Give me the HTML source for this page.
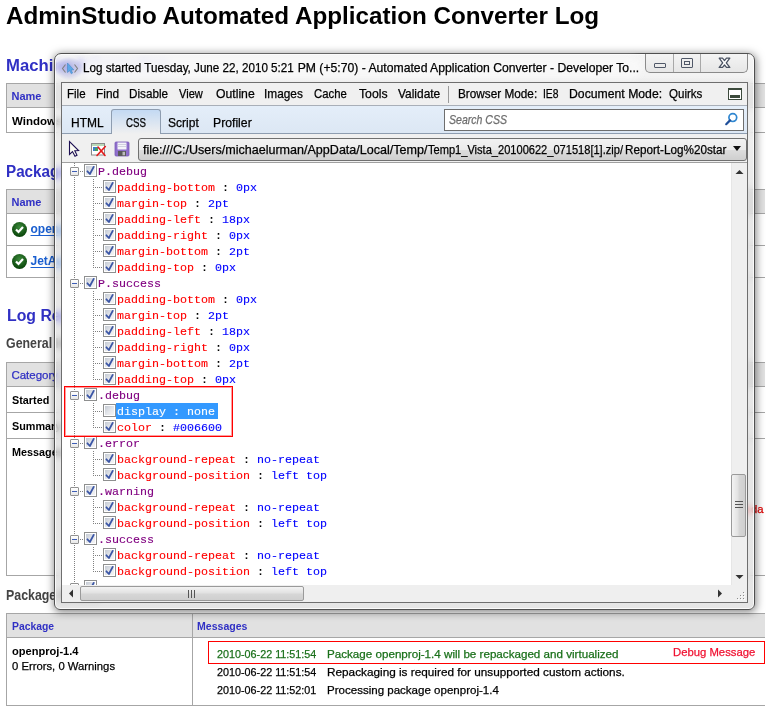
<!DOCTYPE html><html><head><meta charset="utf-8"><style>html,body{margin:0;padding:0;width:776px;height:713px;overflow:hidden;background:#fff;position:relative}</style></head><body><div id="t0" style="position:absolute;left:6.20px;top:2px;font-family:'Liberation Sans', sans-serif;font-size:24px;font-weight:bold;color:#000;white-space:pre;line-height:normal;transform:scaleX(1.0094);transform-origin:0 0;">AdminStudio Automated Application Converter Log</div>
<div id="t1" style="position:absolute;left:6.20px;top:55.2px;font-family:'Liberation Sans', sans-serif;font-size:17.4px;font-weight:bold;color:#3030C4;white-space:pre;line-height:normal;transform:scaleX(0.9600);transform-origin:0 0;">Machine Information</div>
<div style="position:absolute;left:6px;top:83px;width:759px;height:50px;border:1px solid #A6A6A6;border-right:none;box-sizing:border-box;background:#fff"></div>
<div style="position:absolute;left:7px;top:84px;width:758px;height:23px;background:#E1E1E1"></div>
<div style="position:absolute;left:6px;top:107px;width:759px;height:1px;background:#A6A6A6"></div>
<div id="t2" style="position:absolute;left:11.50px;top:89.5px;font-family:'Liberation Sans', sans-serif;font-size:11px;font-weight:bold;color:#3030C4;white-space:pre;line-height:normal;">Name</div>
<div id="t3" style="position:absolute;left:12.00px;top:114.7px;font-family:'Liberation Sans', sans-serif;font-size:11.5px;font-weight:bold;color:#000;white-space:pre;line-height:normal;">Windows 7</div>
<div id="t4" style="position:absolute;left:6.00px;top:160.7px;font-family:'Liberation Sans', sans-serif;font-size:17.4px;font-weight:bold;color:#3030C4;white-space:pre;line-height:normal;transform:scaleX(0.8750);transform-origin:0 0;">Packages</div>
<div style="position:absolute;left:6px;top:189px;width:759px;height:89px;border:1px solid #A6A6A6;border-right:none;box-sizing:border-box;background:#fff"></div>
<div style="position:absolute;left:7px;top:190px;width:758px;height:23px;background:#E1E1E1"></div>
<div style="position:absolute;left:6px;top:213px;width:759px;height:1px;background:#A6A6A6"></div>
<div style="position:absolute;left:6px;top:245px;width:759px;height:1px;background:#A6A6A6"></div>
<div id="t5" style="position:absolute;left:11.50px;top:195.8px;font-family:'Liberation Sans', sans-serif;font-size:11px;font-weight:bold;color:#3030C4;white-space:pre;line-height:normal;">Name</div>
<div style="position:absolute;left:12px;top:221.5px;width:15px;height:15px;border-radius:50%;background:radial-gradient(circle at 50% 35%,#3c8a3c,#0d4a0d 70%,#063006);"></div>
<svg style="position:absolute;left:12px;top:221.5px" width="15" height="15"><path d="M4 7.5 L6.5 10 L11 5" stroke="#fff" stroke-width="2.2" fill="none"/></svg>
<div style="position:absolute;left:12px;top:253.5px;width:15px;height:15px;border-radius:50%;background:radial-gradient(circle at 50% 35%,#3c8a3c,#0d4a0d 70%,#063006);"></div>
<svg style="position:absolute;left:12px;top:253.5px" width="15" height="15"><path d="M4 7.5 L6.5 10 L11 5" stroke="#fff" stroke-width="2.2" fill="none"/></svg>
<div id="t6" style="position:absolute;left:30.50px;top:222.2px;font-family:'Liberation Sans', sans-serif;font-size:12px;font-weight:bold;color:#1A5FD0;white-space:pre;line-height:normal;text-decoration:underline;text-decoration-skip-ink:none;text-underline-offset:2px">openproj-1.4</div>
<div id="t7" style="position:absolute;left:30.50px;top:254.2px;font-family:'Liberation Sans', sans-serif;font-size:12px;font-weight:bold;color:#1A5FD0;white-space:pre;line-height:normal;text-decoration:underline;text-decoration-skip-ink:none;text-underline-offset:2px">JetAudio</div>
<div id="t8" style="position:absolute;left:6.80px;top:304.5px;font-family:'Liberation Sans', sans-serif;font-size:17.4px;font-weight:bold;color:#3030C4;white-space:pre;line-height:normal;transform:scaleX(0.9100);transform-origin:0 0;">Log Report</div>
<div id="t9" style="position:absolute;left:6.20px;top:334.9px;font-family:'Liberation Sans', sans-serif;font-size:14.4px;font-weight:bold;color:#444444;white-space:pre;line-height:normal;transform:scaleX(0.8600);transform-origin:0 0;">General Information</div>
<div style="position:absolute;left:6px;top:362px;width:759px;height:214px;border:1px solid #A6A6A6;border-right:none;box-sizing:border-box;background:#fff"></div>
<div style="position:absolute;left:7px;top:363px;width:758px;height:23px;background:#E1E1E1"></div>
<div style="position:absolute;left:6px;top:386px;width:759px;height:1px;background:#A6A6A6"></div>
<div style="position:absolute;left:6px;top:412px;width:759px;height:1px;background:#A6A6A6"></div>
<div style="position:absolute;left:6px;top:438px;width:759px;height:1px;background:#A6A6A6"></div>
<div id="t10" style="position:absolute;left:11.40px;top:369px;font-family:'Liberation Sans', sans-serif;font-size:11.5px;font-weight:normal;color:#3030C4;white-space:pre;line-height:normal;-webkit-text-stroke:0.25px #3030C4;">Category</div>
<div id="t11" style="position:absolute;left:11.90px;top:394px;font-family:'Liberation Sans', sans-serif;font-size:11.5px;font-weight:bold;color:#000;white-space:pre;line-height:normal;transform:scaleX(0.9400);transform-origin:0 0;">Started</div>
<div id="t12" style="position:absolute;left:11.90px;top:419.8px;font-family:'Liberation Sans', sans-serif;font-size:11.5px;font-weight:bold;color:#000;white-space:pre;line-height:normal;transform:scaleX(0.9400);transform-origin:0 0;">Summary</div>
<div id="t13" style="position:absolute;left:11.90px;top:446px;font-family:'Liberation Sans', sans-serif;font-size:11.5px;font-weight:bold;color:#000;white-space:pre;line-height:normal;transform:scaleX(0.9400);transform-origin:0 0;">Messages</div>
<div id="t14" style="position:absolute;left:723.50px;top:502.7px;font-family:'Liberation Sans', sans-serif;font-size:11.5px;font-weight:normal;color:#DD0000;white-space:pre;line-height:normal;-webkit-text-stroke:0.25px #DD0000;transform:scaleX(0.9667);transform-origin:0 0;">Agen</div>
<div id="t15" style="position:absolute;left:750.60px;top:502.7px;font-family:'Liberation Sans', sans-serif;font-size:11.5px;font-weight:normal;color:#DD0000;white-space:pre;line-height:normal;-webkit-text-stroke:0.25px #DD0000;transform:scaleX(0.9846);transform-origin:0 0;">da</div>
<div id="t16" style="position:absolute;left:6.20px;top:586.5px;font-family:'Liberation Sans', sans-serif;font-size:14.4px;font-weight:bold;color:#444444;white-space:pre;line-height:normal;transform:scaleX(0.8600);transform-origin:0 0;">Package Details</div>
<div style="position:absolute;left:6px;top:613px;width:759px;height:93px;border:1px solid #A6A6A6;border-right:none;box-sizing:border-box;background:#fff"></div>
<div style="position:absolute;left:7px;top:614px;width:758px;height:23px;background:#E1E1E1"></div>
<div style="position:absolute;left:6px;top:637px;width:759px;height:1px;background:#A6A6A6"></div>
<div style="position:absolute;left:192px;top:613px;width:1px;height:93px;background:#A6A6A6"></div>
<div id="t17" style="position:absolute;left:11.80px;top:619.8px;font-family:'Liberation Sans', sans-serif;font-size:11.5px;font-weight:bold;color:#3030C4;white-space:pre;line-height:normal;transform:scaleX(0.9000);transform-origin:0 0;">Package</div>
<div id="t18" style="position:absolute;left:197.40px;top:619.7px;font-family:'Liberation Sans', sans-serif;font-size:11.5px;font-weight:bold;color:#3030C4;white-space:pre;line-height:normal;transform:scaleX(0.9182);transform-origin:0 0;">Messages</div>
<div id="t19" style="position:absolute;left:12.40px;top:644.7px;font-family:'Liberation Sans', sans-serif;font-size:11.5px;font-weight:bold;color:#000;white-space:pre;line-height:normal;transform:scaleX(0.9638);transform-origin:0 0;">openproj-1.4</div>
<div id="t20" style="position:absolute;left:12.00px;top:659.6px;font-family:'Liberation Sans', sans-serif;font-size:11.5px;font-weight:normal;color:#000;white-space:pre;line-height:normal;-webkit-text-stroke:0.25px #000;transform:scaleX(0.9810);transform-origin:0 0;">0 Errors, 0 Warnings</div>
<div style="position:absolute;left:208px;top:641px;width:557px;height:23px;border:1px solid #FF0000;box-sizing:border-box"></div>
<div id="t21" style="position:absolute;left:216.70px;top:647.6px;font-family:'Liberation Sans', sans-serif;font-size:11.5px;font-weight:normal;color:#1A701A;white-space:pre;line-height:normal;-webkit-text-stroke:0.25px #1A701A;transform:scaleX(0.9373);transform-origin:0 0;">2010-06-22 11:51:54</div>
<div id="t22" style="position:absolute;left:326.99px;top:647.6px;font-family:'Liberation Sans', sans-serif;font-size:11.5px;font-weight:normal;color:#1A701A;white-space:pre;line-height:normal;-webkit-text-stroke:0.25px #1A701A;transform:scaleX(1.0111);transform-origin:0 0;">Package openproj-1.4 will be repackaged and virtualized</div>
<div id="t23" style="position:absolute;left:672.72px;top:646px;font-family:'Liberation Sans', sans-serif;font-size:11.5px;font-weight:normal;color:#F01030;white-space:pre;line-height:normal;-webkit-text-stroke:0.25px #F01030;transform:scaleX(0.9831);transform-origin:0 0;">Debug Message</div>
<div id="t24" style="position:absolute;left:216.70px;top:665.7px;font-family:'Liberation Sans', sans-serif;font-size:11.5px;font-weight:normal;color:#000;white-space:pre;line-height:normal;-webkit-text-stroke:0.25px #000;transform:scaleX(0.9373);transform-origin:0 0;">2010-06-22 11:51:54</div>
<div id="t25" style="position:absolute;left:326.98px;top:665.7px;font-family:'Liberation Sans', sans-serif;font-size:11.5px;font-weight:normal;color:#000;white-space:pre;line-height:normal;-webkit-text-stroke:0.25px #000;transform:scaleX(1.0239);transform-origin:0 0;">Repackaging is required for unsupported custom actions.</div>
<div id="t26" style="position:absolute;left:216.70px;top:683.7px;font-family:'Liberation Sans', sans-serif;font-size:11.5px;font-weight:normal;color:#000;white-space:pre;line-height:normal;-webkit-text-stroke:0.25px #000;transform:scaleX(0.9373);transform-origin:0 0;">2010-06-22 11:52:01</div>
<div id="t27" style="position:absolute;left:327.00px;top:683.7px;font-family:'Liberation Sans', sans-serif;font-size:11.5px;font-weight:normal;color:#000;white-space:pre;line-height:normal;-webkit-text-stroke:0.25px #000;transform:scaleX(1.0029);transform-origin:0 0;">Processing package openproj-1.4</div>
<div style="position:absolute;left:54px;top:53px;width:701px;height:557px;border:1px solid #505050;box-sizing:border-box;border-radius:7px 7px 6px 6px;background:linear-gradient(rgba(236,236,236,0.55),rgba(212,212,212,0.55) 30%,rgba(208,208,208,0.55));-webkit-backdrop-filter:blur(3.5px) saturate(1.6);backdrop-filter:blur(3.5px) saturate(1.6);box-shadow:inset 0 0 0 1px rgba(255,255,255,0.8),0.5px 1.5px 9px rgba(0,0,0,0.5)"></div>
<div style="position:absolute;left:82px;top:57px;width:560px;height:22px;border-radius:11px;background:rgba(248,248,248,0.9);filter:blur(3px)"></div>
<div style="position:absolute;left:55px;top:57px;width:28px;height:23px;border-radius:50%;background:radial-gradient(ellipse at center,rgba(120,125,205,0.42),rgba(120,125,205,0.18) 50%,rgba(120,125,205,0) 72%)"></div>
<svg style="position:absolute;left:60px;top:61px" width="22" height="14"><path d="M5.5 3.5 L2.5 7.5 L5.5 11.5" stroke="#808080" stroke-width="1.1" fill="none"/><path d="M14.5 3.5 L17.5 7.5 L14.5 11.5" stroke="#808080" stroke-width="1.1" fill="none"/><path d="M7.5 2 L7.5 11.5 L9.6 9.6 L11.3 12.8 L12.6 12 L11.1 9 L13.8 8.8 Z" fill="#5BA8E8" stroke="#3a7fc0" stroke-width="0.5"/></svg>
<div id="t28" style="position:absolute;left:82.95px;top:60.9px;font-family:'Liberation Sans', sans-serif;font-size:12.2px;font-weight:normal;color:#000;white-space:pre;line-height:normal;-webkit-text-stroke:0.25px #000;transform:scaleX(0.9550);transform-origin:0 0;">Log started Tuesday, June 22, 2010 5:21</div>
<div id="t29" style="position:absolute;left:297.70px;top:60.9px;font-family:'Liberation Sans', sans-serif;font-size:12.2px;font-weight:normal;color:#000;white-space:pre;line-height:normal;-webkit-text-stroke:0.25px #000;">PM (+5:70) - Automated Application Converter - Developer To...</div>
<div style="position:absolute;left:645px;top:54px;width:103px;height:19px;border:1px solid #8a8a8a;border-top:none;box-sizing:border-box;border-radius:0 0 5px 5px;background:linear-gradient(#F4F4F4,#E6E6E6)"></div>
<div style="position:absolute;left:673px;top:54px;width:1px;height:18px;background:#A8A8A8"></div>
<div style="position:absolute;left:700px;top:54px;width:1px;height:18px;background:#A8A8A8"></div>
<div style="position:absolute;left:654px;top:63px;width:12px;height:5px;border:1.5px solid #505868;box-sizing:border-box;border-radius:1px"></div>
<div style="position:absolute;left:681px;top:58px;width:12px;height:10px;border:1.5px solid #505868;box-sizing:border-box;border-radius:1px"></div>
<div style="position:absolute;left:684px;top:61px;width:6px;height:4px;border:1.5px solid #505868;box-sizing:border-box"></div>
<svg style="position:absolute;left:717px;top:57px" width="15" height="12"><path d="M2.2 1.2 L5.5 1.2 L7.5 3.6 L9.5 1.2 L12.8 1.2 L9.3 5.8 L12.8 10.4 L9.5 10.4 L7.5 8 L5.5 10.4 L2.2 10.4 L5.7 5.8 Z" fill="#ffffff" stroke="#4a5262" stroke-width="1.3" stroke-linejoin="round"/></svg>
<div style="position:absolute;left:61px;top:82px;width:687px;height:521px;border:1px solid #6e6e6e;box-sizing:border-box;background:#F0F0F0"></div>
<div style="position:absolute;left:62px;top:83px;width:685px;height:22px;background:#F0F0F0"></div>
<div style="position:absolute;left:62px;top:105px;width:685px;height:1px;background:#A9AFB8"></div>
<div id="t30" style="position:absolute;left:66.76px;top:86.8px;font-family:'Liberation Sans', sans-serif;font-size:12.2px;font-weight:normal;color:#000;white-space:pre;line-height:normal;-webkit-text-stroke:0.25px #000;transform:scaleX(0.9444);transform-origin:0 0;">File</div>
<div id="t31" style="position:absolute;left:95.83px;top:86.8px;font-family:'Liberation Sans', sans-serif;font-size:12.2px;font-weight:normal;color:#000;white-space:pre;line-height:normal;-webkit-text-stroke:0.25px #000;transform:scaleX(0.9727);transform-origin:0 0;">Find</div>
<div id="t32" style="position:absolute;left:129.34px;top:86.8px;font-family:'Liberation Sans', sans-serif;font-size:12.2px;font-weight:normal;color:#000;white-space:pre;line-height:normal;-webkit-text-stroke:0.25px #000;transform:scaleX(0.9590);transform-origin:0 0;">Disable</div>
<div id="t33" style="position:absolute;left:179.30px;top:86.8px;font-family:'Liberation Sans', sans-serif;font-size:12.2px;font-weight:normal;color:#000;white-space:pre;line-height:normal;-webkit-text-stroke:0.25px #000;transform:scaleX(0.9074);transform-origin:0 0;">View</div>
<div id="t34" style="position:absolute;left:215.90px;top:86.8px;font-family:'Liberation Sans', sans-serif;font-size:12.2px;font-weight:normal;color:#000;white-space:pre;line-height:normal;-webkit-text-stroke:0.25px #000;transform:scaleX(1.0026);transform-origin:0 0;">Outline</div>
<div id="t35" style="position:absolute;left:263.93px;top:86.8px;font-family:'Liberation Sans', sans-serif;font-size:12.2px;font-weight:normal;color:#000;white-space:pre;line-height:normal;-webkit-text-stroke:0.25px #000;transform:scaleX(0.9718);transform-origin:0 0;">Images</div>
<div id="t36" style="position:absolute;left:314.40px;top:86.8px;font-family:'Liberation Sans', sans-serif;font-size:12.2px;font-weight:normal;color:#000;white-space:pre;line-height:normal;-webkit-text-stroke:0.25px #000;transform:scaleX(0.9286);transform-origin:0 0;">Cache</div>
<div id="t37" style="position:absolute;left:358.70px;top:86.8px;font-family:'Liberation Sans', sans-serif;font-size:12.2px;font-weight:normal;color:#000;white-space:pre;line-height:normal;-webkit-text-stroke:0.25px #000;transform:scaleX(1.0036);transform-origin:0 0;">Tools</div>
<div id="t38" style="position:absolute;left:397.90px;top:86.8px;font-family:'Liberation Sans', sans-serif;font-size:12.2px;font-weight:normal;color:#000;white-space:pre;line-height:normal;-webkit-text-stroke:0.25px #000;transform:scaleX(0.9791);transform-origin:0 0;">Validate</div>
<div style="position:absolute;left:448px;top:86px;width:1px;height:17px;background:#9a9a9a"></div>
<div id="t39" style="position:absolute;left:458.33px;top:86.8px;font-family:'Liberation Sans', sans-serif;font-size:12.2px;font-weight:normal;color:#000;white-space:pre;line-height:normal;-webkit-text-stroke:0.25px #000;transform:scaleX(0.9663);transform-origin:0 0;">Browser Mode:</div>
<div id="t40" style="position:absolute;left:542.95px;top:86.8px;font-family:'Liberation Sans', sans-serif;font-size:12.2px;font-weight:normal;color:#000;white-space:pre;line-height:normal;-webkit-text-stroke:0.25px #000;transform:scaleX(0.8471);transform-origin:0 0;">IE8</div>
<div id="t41" style="position:absolute;left:569.40px;top:86.8px;font-family:'Liberation Sans', sans-serif;font-size:12.2px;font-weight:normal;color:#000;white-space:pre;line-height:normal;-webkit-text-stroke:0.25px #000;transform:scaleX(1.0033);transform-origin:0 0;">Document Mode:</div>
<div id="t42" style="position:absolute;left:669.40px;top:86.8px;font-family:'Liberation Sans', sans-serif;font-size:12.2px;font-weight:normal;color:#000;white-space:pre;line-height:normal;-webkit-text-stroke:0.25px #000;transform:scaleX(0.9486);transform-origin:0 0;">Quirks</div>
<div style="position:absolute;left:728px;top:88px;width:14px;height:12px;border:1.5px solid #3c4a3c;border-top-width:2px;box-sizing:border-box;background:#fff"></div>
<div style="position:absolute;left:730px;top:95px;width:10px;height:3px;background:#3c4a3c"></div>
<div style="position:absolute;left:62px;top:106px;width:685px;height:27px;background:linear-gradient(#E4EEF9,#DCE7F4)"></div>
<div style="position:absolute;left:62px;top:133px;width:685px;height:1px;background:#8E9DB0"></div>
<div id="t43" style="position:absolute;left:70.82px;top:115.7px;font-family:'Liberation Sans', sans-serif;font-size:12.2px;font-weight:normal;color:#000;white-space:pre;line-height:normal;-webkit-text-stroke:0.25px #000;transform:scaleX(0.9813);transform-origin:0 0;">HTML</div>
<div style="position:absolute;left:111px;top:109px;width:50px;height:25px;border:1px solid #8E9DB0;border-bottom:none;box-sizing:border-box;border-radius:3px 3px 0 0;background:linear-gradient(#C3D9F3,#F0F0F0)"></div>
<div id="t44" style="position:absolute;left:125.90px;top:115.7px;font-family:'Liberation Sans', sans-serif;font-size:12.2px;font-weight:normal;color:#000;white-space:pre;line-height:normal;-webkit-text-stroke:0.25px #000;transform:scaleX(0.7960);transform-origin:0 0;">CSS</div>
<div id="t45" style="position:absolute;left:168.01px;top:115.7px;font-family:'Liberation Sans', sans-serif;font-size:12.2px;font-weight:normal;color:#000;white-space:pre;line-height:normal;-webkit-text-stroke:0.25px #000;transform:scaleX(0.9867);transform-origin:0 0;">Script</div>
<div id="t46" style="position:absolute;left:213.10px;top:115.7px;font-family:'Liberation Sans', sans-serif;font-size:12.2px;font-weight:normal;color:#000;white-space:pre;line-height:normal;-webkit-text-stroke:0.25px #000;transform:scaleX(1.0026);transform-origin:0 0;">Profiler</div>
<div style="position:absolute;left:444px;top:109px;width:300px;height:22px;border:1px solid #6E6E6E;box-sizing:border-box;background:#fff"></div>
<div id="t47" style="position:absolute;left:449.00px;top:113.2px;font-family:'Liberation Sans', sans-serif;font-size:12.2px;font-weight:normal;color:#6D6D6D;white-space:pre;line-height:normal;font-style:italic;-webkit-text-stroke:0.25px #6D6D6D;transform:scaleX(0.8657);transform-origin:0 0;">Search CSS</div>
<svg style="position:absolute;left:724px;top:111px" width="16" height="16"><circle cx="8.8" cy="6.6" r="3.9" stroke="#2f86d0" stroke-width="1.7" fill="#fff"/><path d="M6 9.4 L2.2 13.2" stroke="#1f4f9a" stroke-width="2.2" stroke-linecap="round"/></svg>
<div style="position:absolute;left:62px;top:134px;width:685px;height:28px;background:#F0F0F0"></div>
<svg style="position:absolute;left:64px;top:136px" width="20" height="24"><path d="M5.5 5.5 L5.5 18.5 L8.5 15.6 L11 20.3 L13 19.3 L10.8 14.8 L14.6 14.6 Z" fill="#fbfbf4" stroke="#1c0f52" stroke-width="1.1" stroke-linejoin="miter"/></svg>
<svg style="position:absolute;left:90px;top:142px" width="18" height="16"><rect x="1.5" y="1.5" width="13" height="11.5" fill="#fff" stroke="#8a8a8a" stroke-width="1"/><rect x="2" y="2" width="12" height="2" fill="#b9dab9"/><rect x="3" y="5" width="5" height="4" fill="#3c7fc8"/><rect x="5" y="6" width="3" height="3" fill="#4aa05a"/><path d="M7 13.5 L15.3 4.5 M8 5 L15 13.5" stroke="#e41a1a" stroke-width="1.6" stroke-linecap="round"/></svg>
<svg style="position:absolute;left:114px;top:141px" width="16" height="16"><rect x="1" y="1" width="14" height="14" rx="1" fill="#8f6fcc" stroke="#7a5ab8" stroke-width="0.8"/><rect x="3.5" y="1.5" width="9" height="7" fill="#f4f4fa"/><path d="M4 3.5 H12 M4 5.5 H12" stroke="#c8c8d8" stroke-width="0.8"/><rect x="4" y="10" width="8" height="5" fill="#5a5a5a"/><rect x="8.5" y="10.8" width="2.5" height="3.5" fill="#bdbdbd"/></svg>
<div style="position:absolute;left:138px;top:138px;width:609px;height:23px;border:1px solid #707070;box-sizing:border-box;border-radius:3px;background:linear-gradient(#F2F2F2 0%,#EBEBEB 50%,#DDDDDD 51%,#CFCFCF 100%)"></div>
<div id="t48" style="position:absolute;left:142.50px;top:142.8px;font-family:'Liberation Sans', sans-serif;font-size:12.2px;font-weight:normal;color:#000;white-space:pre;line-height:normal;-webkit-text-stroke:0.25px #000;transform:scaleX(1.0292);transform-origin:0 0;">file:///C:/Users/michaelurman/AppData/Local/Temp/</div>
<div id="t49" style="position:absolute;left:428.20px;top:142.8px;font-family:'Liberation Sans', sans-serif;font-size:12.2px;font-weight:normal;color:#000;white-space:pre;line-height:normal;-webkit-text-stroke:0.25px #000;transform:scaleX(0.9088);transform-origin:0 0;">Temp1_Vista_20100622_071518[1].zip/</div>
<div id="t50" style="position:absolute;left:624.64px;top:142.8px;font-family:'Liberation Sans', sans-serif;font-size:12.2px;font-weight:normal;color:#000;white-space:pre;line-height:normal;-webkit-text-stroke:0.25px #000;transform:scaleX(0.9600);transform-origin:0 0;">Report-Log%20star</div>
<svg style="position:absolute;left:733px;top:146px" width="9" height="6"><path d="M0 0 L8 0 L4 5 Z" fill="#111"/></svg>
<div style="position:absolute;left:62px;top:162px;width:685px;height:1px;background:#A0A0A0"></div>
<div style="position:absolute;left:62px;top:163px;width:669px;height:422px;background:#fff"></div>
<div style="position:absolute;left:74px;top:163px;width:1px;height:422px;background:repeating-linear-gradient(#808080 0 1px,transparent 1px 2px)"></div>
<div style="position:absolute;left:70px;top:167px;width:9px;height:9px;border:1px solid #919191;box-sizing:border-box;border-radius:1px;background:linear-gradient(#fff,#E8E8E8)"><div style="position:absolute;left:1px;top:3px;width:5px;height:1px;background:#3D5DB5"></div></div>
<div style="position:absolute;left:80px;top:171px;width:4px;height:1px;background:repeating-linear-gradient(90deg,#808080 0 1px,transparent 1px 2px)"></div>
<div style="position:absolute;left:84px;top:164px;width:13px;height:13px;border:1px solid #8E8F8F;box-sizing:border-box;background:#FFFFFF"><div style="position:absolute;left:1px;top:1px;width:9px;height:9px;background:linear-gradient(135deg,#C4CAD4,#E6E8EC 55%,#F4F4F4)"></div></div><svg style="position:absolute;left:84px;top:164px" width="13" height="13"><path d="M3.4 7.3 L5.9 10 L9.7 2.9" stroke="#3B56A6" stroke-width="1.8" fill="none" stroke-linejoin="round" stroke-linecap="round"/></svg>
<div id="t51" style="position:absolute;left:98.00px;top:165.2px;font-family:'Liberation Mono', monospace;font-size:11.67px;font-weight:normal;color:#800080;white-space:pre;line-height:normal;-webkit-text-stroke:0.12px #800080;">P.debug</div>
<div style="position:absolute;left:93px;top:179px;width:1px;height:89px;background:repeating-linear-gradient(#808080 0 1px,transparent 1px 2px)"></div>
<div style="position:absolute;left:93px;top:187px;width:9px;height:1px;background:repeating-linear-gradient(90deg,#808080 0 1px,transparent 1px 2px)"></div>
<div style="position:absolute;left:103px;top:180px;width:13px;height:13px;border:1px solid #8E8F8F;box-sizing:border-box;background:#FFFFFF"><div style="position:absolute;left:1px;top:1px;width:9px;height:9px;background:linear-gradient(135deg,#C4CAD4,#E6E8EC 55%,#F4F4F4)"></div></div><svg style="position:absolute;left:103px;top:180px" width="13" height="13"><path d="M3.4 7.3 L5.9 10 L9.7 2.9" stroke="#3B56A6" stroke-width="1.8" fill="none" stroke-linejoin="round" stroke-linecap="round"/></svg>
<div id="t52" style="position:absolute;left:117.00px;top:181.2px;font-family:'Liberation Mono', monospace;font-size:11.67px;font-weight:normal;color:#FF0000;white-space:pre;line-height:normal;-webkit-text-stroke:0.12px #FF0000;">padding-bottom</div>
<div id="t53" style="position:absolute;left:222.00px;top:181.2px;font-family:'Liberation Mono', monospace;font-size:11.67px;font-weight:normal;color:#000;white-space:pre;line-height:normal;-webkit-text-stroke:0.12px #000;">:</div>
<div id="t54" style="position:absolute;left:236.00px;top:181.2px;font-family:'Liberation Mono', monospace;font-size:11.67px;font-weight:normal;color:#0000FF;white-space:pre;line-height:normal;-webkit-text-stroke:0.12px #0000FF;">0px</div>
<div style="position:absolute;left:93px;top:203px;width:9px;height:1px;background:repeating-linear-gradient(90deg,#808080 0 1px,transparent 1px 2px)"></div>
<div style="position:absolute;left:103px;top:196px;width:13px;height:13px;border:1px solid #8E8F8F;box-sizing:border-box;background:#FFFFFF"><div style="position:absolute;left:1px;top:1px;width:9px;height:9px;background:linear-gradient(135deg,#C4CAD4,#E6E8EC 55%,#F4F4F4)"></div></div><svg style="position:absolute;left:103px;top:196px" width="13" height="13"><path d="M3.4 7.3 L5.9 10 L9.7 2.9" stroke="#3B56A6" stroke-width="1.8" fill="none" stroke-linejoin="round" stroke-linecap="round"/></svg>
<div id="t55" style="position:absolute;left:117.00px;top:197.2px;font-family:'Liberation Mono', monospace;font-size:11.67px;font-weight:normal;color:#FF0000;white-space:pre;line-height:normal;-webkit-text-stroke:0.12px #FF0000;">margin-top</div>
<div id="t56" style="position:absolute;left:194.00px;top:197.2px;font-family:'Liberation Mono', monospace;font-size:11.67px;font-weight:normal;color:#000;white-space:pre;line-height:normal;-webkit-text-stroke:0.12px #000;">:</div>
<div id="t57" style="position:absolute;left:208.00px;top:197.2px;font-family:'Liberation Mono', monospace;font-size:11.67px;font-weight:normal;color:#0000FF;white-space:pre;line-height:normal;-webkit-text-stroke:0.12px #0000FF;">2pt</div>
<div style="position:absolute;left:93px;top:219px;width:9px;height:1px;background:repeating-linear-gradient(90deg,#808080 0 1px,transparent 1px 2px)"></div>
<div style="position:absolute;left:103px;top:212px;width:13px;height:13px;border:1px solid #8E8F8F;box-sizing:border-box;background:#FFFFFF"><div style="position:absolute;left:1px;top:1px;width:9px;height:9px;background:linear-gradient(135deg,#C4CAD4,#E6E8EC 55%,#F4F4F4)"></div></div><svg style="position:absolute;left:103px;top:212px" width="13" height="13"><path d="M3.4 7.3 L5.9 10 L9.7 2.9" stroke="#3B56A6" stroke-width="1.8" fill="none" stroke-linejoin="round" stroke-linecap="round"/></svg>
<div id="t58" style="position:absolute;left:117.00px;top:213.2px;font-family:'Liberation Mono', monospace;font-size:11.67px;font-weight:normal;color:#FF0000;white-space:pre;line-height:normal;-webkit-text-stroke:0.12px #FF0000;">padding-left</div>
<div id="t59" style="position:absolute;left:208.00px;top:213.2px;font-family:'Liberation Mono', monospace;font-size:11.67px;font-weight:normal;color:#000;white-space:pre;line-height:normal;-webkit-text-stroke:0.12px #000;">:</div>
<div id="t60" style="position:absolute;left:222.00px;top:213.2px;font-family:'Liberation Mono', monospace;font-size:11.67px;font-weight:normal;color:#0000FF;white-space:pre;line-height:normal;-webkit-text-stroke:0.12px #0000FF;">18px</div>
<div style="position:absolute;left:93px;top:235px;width:9px;height:1px;background:repeating-linear-gradient(90deg,#808080 0 1px,transparent 1px 2px)"></div>
<div style="position:absolute;left:103px;top:228px;width:13px;height:13px;border:1px solid #8E8F8F;box-sizing:border-box;background:#FFFFFF"><div style="position:absolute;left:1px;top:1px;width:9px;height:9px;background:linear-gradient(135deg,#C4CAD4,#E6E8EC 55%,#F4F4F4)"></div></div><svg style="position:absolute;left:103px;top:228px" width="13" height="13"><path d="M3.4 7.3 L5.9 10 L9.7 2.9" stroke="#3B56A6" stroke-width="1.8" fill="none" stroke-linejoin="round" stroke-linecap="round"/></svg>
<div id="t61" style="position:absolute;left:117.00px;top:229.2px;font-family:'Liberation Mono', monospace;font-size:11.67px;font-weight:normal;color:#FF0000;white-space:pre;line-height:normal;-webkit-text-stroke:0.12px #FF0000;">padding-right</div>
<div id="t62" style="position:absolute;left:215.00px;top:229.2px;font-family:'Liberation Mono', monospace;font-size:11.67px;font-weight:normal;color:#000;white-space:pre;line-height:normal;-webkit-text-stroke:0.12px #000;">:</div>
<div id="t63" style="position:absolute;left:229.00px;top:229.2px;font-family:'Liberation Mono', monospace;font-size:11.67px;font-weight:normal;color:#0000FF;white-space:pre;line-height:normal;-webkit-text-stroke:0.12px #0000FF;">0px</div>
<div style="position:absolute;left:93px;top:251px;width:9px;height:1px;background:repeating-linear-gradient(90deg,#808080 0 1px,transparent 1px 2px)"></div>
<div style="position:absolute;left:103px;top:244px;width:13px;height:13px;border:1px solid #8E8F8F;box-sizing:border-box;background:#FFFFFF"><div style="position:absolute;left:1px;top:1px;width:9px;height:9px;background:linear-gradient(135deg,#C4CAD4,#E6E8EC 55%,#F4F4F4)"></div></div><svg style="position:absolute;left:103px;top:244px" width="13" height="13"><path d="M3.4 7.3 L5.9 10 L9.7 2.9" stroke="#3B56A6" stroke-width="1.8" fill="none" stroke-linejoin="round" stroke-linecap="round"/></svg>
<div id="t64" style="position:absolute;left:117.00px;top:245.2px;font-family:'Liberation Mono', monospace;font-size:11.67px;font-weight:normal;color:#FF0000;white-space:pre;line-height:normal;-webkit-text-stroke:0.12px #FF0000;">margin-bottom</div>
<div id="t65" style="position:absolute;left:215.00px;top:245.2px;font-family:'Liberation Mono', monospace;font-size:11.67px;font-weight:normal;color:#000;white-space:pre;line-height:normal;-webkit-text-stroke:0.12px #000;">:</div>
<div id="t66" style="position:absolute;left:229.00px;top:245.2px;font-family:'Liberation Mono', monospace;font-size:11.67px;font-weight:normal;color:#0000FF;white-space:pre;line-height:normal;-webkit-text-stroke:0.12px #0000FF;">2pt</div>
<div style="position:absolute;left:93px;top:267px;width:9px;height:1px;background:repeating-linear-gradient(90deg,#808080 0 1px,transparent 1px 2px)"></div>
<div style="position:absolute;left:103px;top:260px;width:13px;height:13px;border:1px solid #8E8F8F;box-sizing:border-box;background:#FFFFFF"><div style="position:absolute;left:1px;top:1px;width:9px;height:9px;background:linear-gradient(135deg,#C4CAD4,#E6E8EC 55%,#F4F4F4)"></div></div><svg style="position:absolute;left:103px;top:260px" width="13" height="13"><path d="M3.4 7.3 L5.9 10 L9.7 2.9" stroke="#3B56A6" stroke-width="1.8" fill="none" stroke-linejoin="round" stroke-linecap="round"/></svg>
<div id="t67" style="position:absolute;left:117.00px;top:261.2px;font-family:'Liberation Mono', monospace;font-size:11.67px;font-weight:normal;color:#FF0000;white-space:pre;line-height:normal;-webkit-text-stroke:0.12px #FF0000;">padding-top</div>
<div id="t68" style="position:absolute;left:201.00px;top:261.2px;font-family:'Liberation Mono', monospace;font-size:11.67px;font-weight:normal;color:#000;white-space:pre;line-height:normal;-webkit-text-stroke:0.12px #000;">:</div>
<div id="t69" style="position:absolute;left:215.00px;top:261.2px;font-family:'Liberation Mono', monospace;font-size:11.67px;font-weight:normal;color:#0000FF;white-space:pre;line-height:normal;-webkit-text-stroke:0.12px #0000FF;">0px</div>
<div style="position:absolute;left:70px;top:279px;width:9px;height:9px;border:1px solid #919191;box-sizing:border-box;border-radius:1px;background:linear-gradient(#fff,#E8E8E8)"><div style="position:absolute;left:1px;top:3px;width:5px;height:1px;background:#3D5DB5"></div></div>
<div style="position:absolute;left:80px;top:283px;width:4px;height:1px;background:repeating-linear-gradient(90deg,#808080 0 1px,transparent 1px 2px)"></div>
<div style="position:absolute;left:84px;top:276px;width:13px;height:13px;border:1px solid #8E8F8F;box-sizing:border-box;background:#FFFFFF"><div style="position:absolute;left:1px;top:1px;width:9px;height:9px;background:linear-gradient(135deg,#C4CAD4,#E6E8EC 55%,#F4F4F4)"></div></div><svg style="position:absolute;left:84px;top:276px" width="13" height="13"><path d="M3.4 7.3 L5.9 10 L9.7 2.9" stroke="#3B56A6" stroke-width="1.8" fill="none" stroke-linejoin="round" stroke-linecap="round"/></svg>
<div id="t70" style="position:absolute;left:98.00px;top:277.2px;font-family:'Liberation Mono', monospace;font-size:11.67px;font-weight:normal;color:#800080;white-space:pre;line-height:normal;-webkit-text-stroke:0.12px #800080;">P.success</div>
<div style="position:absolute;left:93px;top:291px;width:1px;height:89px;background:repeating-linear-gradient(#808080 0 1px,transparent 1px 2px)"></div>
<div style="position:absolute;left:93px;top:299px;width:9px;height:1px;background:repeating-linear-gradient(90deg,#808080 0 1px,transparent 1px 2px)"></div>
<div style="position:absolute;left:103px;top:292px;width:13px;height:13px;border:1px solid #8E8F8F;box-sizing:border-box;background:#FFFFFF"><div style="position:absolute;left:1px;top:1px;width:9px;height:9px;background:linear-gradient(135deg,#C4CAD4,#E6E8EC 55%,#F4F4F4)"></div></div><svg style="position:absolute;left:103px;top:292px" width="13" height="13"><path d="M3.4 7.3 L5.9 10 L9.7 2.9" stroke="#3B56A6" stroke-width="1.8" fill="none" stroke-linejoin="round" stroke-linecap="round"/></svg>
<div id="t71" style="position:absolute;left:117.00px;top:293.2px;font-family:'Liberation Mono', monospace;font-size:11.67px;font-weight:normal;color:#FF0000;white-space:pre;line-height:normal;-webkit-text-stroke:0.12px #FF0000;">padding-bottom</div>
<div id="t72" style="position:absolute;left:222.00px;top:293.2px;font-family:'Liberation Mono', monospace;font-size:11.67px;font-weight:normal;color:#000;white-space:pre;line-height:normal;-webkit-text-stroke:0.12px #000;">:</div>
<div id="t73" style="position:absolute;left:236.00px;top:293.2px;font-family:'Liberation Mono', monospace;font-size:11.67px;font-weight:normal;color:#0000FF;white-space:pre;line-height:normal;-webkit-text-stroke:0.12px #0000FF;">0px</div>
<div style="position:absolute;left:93px;top:315px;width:9px;height:1px;background:repeating-linear-gradient(90deg,#808080 0 1px,transparent 1px 2px)"></div>
<div style="position:absolute;left:103px;top:308px;width:13px;height:13px;border:1px solid #8E8F8F;box-sizing:border-box;background:#FFFFFF"><div style="position:absolute;left:1px;top:1px;width:9px;height:9px;background:linear-gradient(135deg,#C4CAD4,#E6E8EC 55%,#F4F4F4)"></div></div><svg style="position:absolute;left:103px;top:308px" width="13" height="13"><path d="M3.4 7.3 L5.9 10 L9.7 2.9" stroke="#3B56A6" stroke-width="1.8" fill="none" stroke-linejoin="round" stroke-linecap="round"/></svg>
<div id="t74" style="position:absolute;left:117.00px;top:309.2px;font-family:'Liberation Mono', monospace;font-size:11.67px;font-weight:normal;color:#FF0000;white-space:pre;line-height:normal;-webkit-text-stroke:0.12px #FF0000;">margin-top</div>
<div id="t75" style="position:absolute;left:194.00px;top:309.2px;font-family:'Liberation Mono', monospace;font-size:11.67px;font-weight:normal;color:#000;white-space:pre;line-height:normal;-webkit-text-stroke:0.12px #000;">:</div>
<div id="t76" style="position:absolute;left:208.00px;top:309.2px;font-family:'Liberation Mono', monospace;font-size:11.67px;font-weight:normal;color:#0000FF;white-space:pre;line-height:normal;-webkit-text-stroke:0.12px #0000FF;">2pt</div>
<div style="position:absolute;left:93px;top:331px;width:9px;height:1px;background:repeating-linear-gradient(90deg,#808080 0 1px,transparent 1px 2px)"></div>
<div style="position:absolute;left:103px;top:324px;width:13px;height:13px;border:1px solid #8E8F8F;box-sizing:border-box;background:#FFFFFF"><div style="position:absolute;left:1px;top:1px;width:9px;height:9px;background:linear-gradient(135deg,#C4CAD4,#E6E8EC 55%,#F4F4F4)"></div></div><svg style="position:absolute;left:103px;top:324px" width="13" height="13"><path d="M3.4 7.3 L5.9 10 L9.7 2.9" stroke="#3B56A6" stroke-width="1.8" fill="none" stroke-linejoin="round" stroke-linecap="round"/></svg>
<div id="t77" style="position:absolute;left:117.00px;top:325.2px;font-family:'Liberation Mono', monospace;font-size:11.67px;font-weight:normal;color:#FF0000;white-space:pre;line-height:normal;-webkit-text-stroke:0.12px #FF0000;">padding-left</div>
<div id="t78" style="position:absolute;left:208.00px;top:325.2px;font-family:'Liberation Mono', monospace;font-size:11.67px;font-weight:normal;color:#000;white-space:pre;line-height:normal;-webkit-text-stroke:0.12px #000;">:</div>
<div id="t79" style="position:absolute;left:222.00px;top:325.2px;font-family:'Liberation Mono', monospace;font-size:11.67px;font-weight:normal;color:#0000FF;white-space:pre;line-height:normal;-webkit-text-stroke:0.12px #0000FF;">18px</div>
<div style="position:absolute;left:93px;top:347px;width:9px;height:1px;background:repeating-linear-gradient(90deg,#808080 0 1px,transparent 1px 2px)"></div>
<div style="position:absolute;left:103px;top:340px;width:13px;height:13px;border:1px solid #8E8F8F;box-sizing:border-box;background:#FFFFFF"><div style="position:absolute;left:1px;top:1px;width:9px;height:9px;background:linear-gradient(135deg,#C4CAD4,#E6E8EC 55%,#F4F4F4)"></div></div><svg style="position:absolute;left:103px;top:340px" width="13" height="13"><path d="M3.4 7.3 L5.9 10 L9.7 2.9" stroke="#3B56A6" stroke-width="1.8" fill="none" stroke-linejoin="round" stroke-linecap="round"/></svg>
<div id="t80" style="position:absolute;left:117.00px;top:341.2px;font-family:'Liberation Mono', monospace;font-size:11.67px;font-weight:normal;color:#FF0000;white-space:pre;line-height:normal;-webkit-text-stroke:0.12px #FF0000;">padding-right</div>
<div id="t81" style="position:absolute;left:215.00px;top:341.2px;font-family:'Liberation Mono', monospace;font-size:11.67px;font-weight:normal;color:#000;white-space:pre;line-height:normal;-webkit-text-stroke:0.12px #000;">:</div>
<div id="t82" style="position:absolute;left:229.00px;top:341.2px;font-family:'Liberation Mono', monospace;font-size:11.67px;font-weight:normal;color:#0000FF;white-space:pre;line-height:normal;-webkit-text-stroke:0.12px #0000FF;">0px</div>
<div style="position:absolute;left:93px;top:363px;width:9px;height:1px;background:repeating-linear-gradient(90deg,#808080 0 1px,transparent 1px 2px)"></div>
<div style="position:absolute;left:103px;top:356px;width:13px;height:13px;border:1px solid #8E8F8F;box-sizing:border-box;background:#FFFFFF"><div style="position:absolute;left:1px;top:1px;width:9px;height:9px;background:linear-gradient(135deg,#C4CAD4,#E6E8EC 55%,#F4F4F4)"></div></div><svg style="position:absolute;left:103px;top:356px" width="13" height="13"><path d="M3.4 7.3 L5.9 10 L9.7 2.9" stroke="#3B56A6" stroke-width="1.8" fill="none" stroke-linejoin="round" stroke-linecap="round"/></svg>
<div id="t83" style="position:absolute;left:117.00px;top:357.2px;font-family:'Liberation Mono', monospace;font-size:11.67px;font-weight:normal;color:#FF0000;white-space:pre;line-height:normal;-webkit-text-stroke:0.12px #FF0000;">margin-bottom</div>
<div id="t84" style="position:absolute;left:215.00px;top:357.2px;font-family:'Liberation Mono', monospace;font-size:11.67px;font-weight:normal;color:#000;white-space:pre;line-height:normal;-webkit-text-stroke:0.12px #000;">:</div>
<div id="t85" style="position:absolute;left:229.00px;top:357.2px;font-family:'Liberation Mono', monospace;font-size:11.67px;font-weight:normal;color:#0000FF;white-space:pre;line-height:normal;-webkit-text-stroke:0.12px #0000FF;">2pt</div>
<div style="position:absolute;left:93px;top:379px;width:9px;height:1px;background:repeating-linear-gradient(90deg,#808080 0 1px,transparent 1px 2px)"></div>
<div style="position:absolute;left:103px;top:372px;width:13px;height:13px;border:1px solid #8E8F8F;box-sizing:border-box;background:#FFFFFF"><div style="position:absolute;left:1px;top:1px;width:9px;height:9px;background:linear-gradient(135deg,#C4CAD4,#E6E8EC 55%,#F4F4F4)"></div></div><svg style="position:absolute;left:103px;top:372px" width="13" height="13"><path d="M3.4 7.3 L5.9 10 L9.7 2.9" stroke="#3B56A6" stroke-width="1.8" fill="none" stroke-linejoin="round" stroke-linecap="round"/></svg>
<div id="t86" style="position:absolute;left:117.00px;top:373.2px;font-family:'Liberation Mono', monospace;font-size:11.67px;font-weight:normal;color:#FF0000;white-space:pre;line-height:normal;-webkit-text-stroke:0.12px #FF0000;">padding-top</div>
<div id="t87" style="position:absolute;left:201.00px;top:373.2px;font-family:'Liberation Mono', monospace;font-size:11.67px;font-weight:normal;color:#000;white-space:pre;line-height:normal;-webkit-text-stroke:0.12px #000;">:</div>
<div id="t88" style="position:absolute;left:215.00px;top:373.2px;font-family:'Liberation Mono', monospace;font-size:11.67px;font-weight:normal;color:#0000FF;white-space:pre;line-height:normal;-webkit-text-stroke:0.12px #0000FF;">0px</div>
<div style="position:absolute;left:70px;top:391px;width:9px;height:9px;border:1px solid #919191;box-sizing:border-box;border-radius:1px;background:linear-gradient(#fff,#E8E8E8)"><div style="position:absolute;left:1px;top:3px;width:5px;height:1px;background:#3D5DB5"></div></div>
<div style="position:absolute;left:80px;top:395px;width:4px;height:1px;background:repeating-linear-gradient(90deg,#808080 0 1px,transparent 1px 2px)"></div>
<div style="position:absolute;left:84px;top:388px;width:13px;height:13px;border:1px solid #8E8F8F;box-sizing:border-box;background:#FFFFFF"><div style="position:absolute;left:1px;top:1px;width:9px;height:9px;background:linear-gradient(135deg,#C4CAD4,#E6E8EC 55%,#F4F4F4)"></div></div><svg style="position:absolute;left:84px;top:388px" width="13" height="13"><path d="M3.4 7.3 L5.9 10 L9.7 2.9" stroke="#3B56A6" stroke-width="1.8" fill="none" stroke-linejoin="round" stroke-linecap="round"/></svg>
<div id="t89" style="position:absolute;left:98.00px;top:389.2px;font-family:'Liberation Mono', monospace;font-size:11.67px;font-weight:normal;color:#800080;white-space:pre;line-height:normal;-webkit-text-stroke:0.12px #800080;">.debug</div>
<div style="position:absolute;left:93px;top:403px;width:1px;height:25px;background:repeating-linear-gradient(#808080 0 1px,transparent 1px 2px)"></div>
<div style="position:absolute;left:93px;top:411px;width:9px;height:1px;background:repeating-linear-gradient(90deg,#808080 0 1px,transparent 1px 2px)"></div>
<div style="position:absolute;left:116px;top:403px;width:102px;height:16px;background:#3399FF"></div>
<div style="position:absolute;left:103px;top:404px;width:13px;height:13px;border:1px solid #8E8F8F;box-sizing:border-box;background:#FFFFFF"><div style="position:absolute;left:1px;top:1px;width:9px;height:9px;background:linear-gradient(135deg,#C4CAD4,#E6E8EC 55%,#F4F4F4)"></div></div>
<div id="t90" style="position:absolute;left:117.00px;top:405.2px;font-family:'Liberation Mono', monospace;font-size:11.67px;font-weight:normal;color:#fff;white-space:pre;line-height:normal;-webkit-text-stroke:0.12px #fff;">display</div>
<div id="t91" style="position:absolute;left:173.00px;top:405.2px;font-family:'Liberation Mono', monospace;font-size:11.67px;font-weight:normal;color:#fff;white-space:pre;line-height:normal;-webkit-text-stroke:0.12px #fff;">:</div>
<div id="t92" style="position:absolute;left:187.00px;top:405.2px;font-family:'Liberation Mono', monospace;font-size:11.67px;font-weight:normal;color:#fff;white-space:pre;line-height:normal;-webkit-text-stroke:0.12px #fff;">none</div>
<div style="position:absolute;left:93px;top:427px;width:9px;height:1px;background:repeating-linear-gradient(90deg,#808080 0 1px,transparent 1px 2px)"></div>
<div style="position:absolute;left:103px;top:420px;width:13px;height:13px;border:1px solid #8E8F8F;box-sizing:border-box;background:#FFFFFF"><div style="position:absolute;left:1px;top:1px;width:9px;height:9px;background:linear-gradient(135deg,#C4CAD4,#E6E8EC 55%,#F4F4F4)"></div></div><svg style="position:absolute;left:103px;top:420px" width="13" height="13"><path d="M3.4 7.3 L5.9 10 L9.7 2.9" stroke="#3B56A6" stroke-width="1.8" fill="none" stroke-linejoin="round" stroke-linecap="round"/></svg>
<div id="t93" style="position:absolute;left:117.00px;top:421.2px;font-family:'Liberation Mono', monospace;font-size:11.67px;font-weight:normal;color:#FF0000;white-space:pre;line-height:normal;-webkit-text-stroke:0.12px #FF0000;">color</div>
<div id="t94" style="position:absolute;left:159.00px;top:421.2px;font-family:'Liberation Mono', monospace;font-size:11.67px;font-weight:normal;color:#000;white-space:pre;line-height:normal;-webkit-text-stroke:0.12px #000;">:</div>
<div id="t95" style="position:absolute;left:173.00px;top:421.2px;font-family:'Liberation Mono', monospace;font-size:11.67px;font-weight:normal;color:#0000FF;white-space:pre;line-height:normal;-webkit-text-stroke:0.12px #0000FF;">#006600</div>
<div style="position:absolute;left:70px;top:439px;width:9px;height:9px;border:1px solid #919191;box-sizing:border-box;border-radius:1px;background:linear-gradient(#fff,#E8E8E8)"><div style="position:absolute;left:1px;top:3px;width:5px;height:1px;background:#3D5DB5"></div></div>
<div style="position:absolute;left:80px;top:443px;width:4px;height:1px;background:repeating-linear-gradient(90deg,#808080 0 1px,transparent 1px 2px)"></div>
<div style="position:absolute;left:84px;top:436px;width:13px;height:13px;border:1px solid #8E8F8F;box-sizing:border-box;background:#FFFFFF"><div style="position:absolute;left:1px;top:1px;width:9px;height:9px;background:linear-gradient(135deg,#C4CAD4,#E6E8EC 55%,#F4F4F4)"></div></div><svg style="position:absolute;left:84px;top:436px" width="13" height="13"><path d="M3.4 7.3 L5.9 10 L9.7 2.9" stroke="#3B56A6" stroke-width="1.8" fill="none" stroke-linejoin="round" stroke-linecap="round"/></svg>
<div id="t96" style="position:absolute;left:98.00px;top:437.2px;font-family:'Liberation Mono', monospace;font-size:11.67px;font-weight:normal;color:#800080;white-space:pre;line-height:normal;-webkit-text-stroke:0.12px #800080;">.error</div>
<div style="position:absolute;left:93px;top:451px;width:1px;height:25px;background:repeating-linear-gradient(#808080 0 1px,transparent 1px 2px)"></div>
<div style="position:absolute;left:93px;top:459px;width:9px;height:1px;background:repeating-linear-gradient(90deg,#808080 0 1px,transparent 1px 2px)"></div>
<div style="position:absolute;left:103px;top:452px;width:13px;height:13px;border:1px solid #8E8F8F;box-sizing:border-box;background:#FFFFFF"><div style="position:absolute;left:1px;top:1px;width:9px;height:9px;background:linear-gradient(135deg,#C4CAD4,#E6E8EC 55%,#F4F4F4)"></div></div><svg style="position:absolute;left:103px;top:452px" width="13" height="13"><path d="M3.4 7.3 L5.9 10 L9.7 2.9" stroke="#3B56A6" stroke-width="1.8" fill="none" stroke-linejoin="round" stroke-linecap="round"/></svg>
<div id="t97" style="position:absolute;left:117.00px;top:453.2px;font-family:'Liberation Mono', monospace;font-size:11.67px;font-weight:normal;color:#FF0000;white-space:pre;line-height:normal;-webkit-text-stroke:0.12px #FF0000;">background-repeat</div>
<div id="t98" style="position:absolute;left:243.00px;top:453.2px;font-family:'Liberation Mono', monospace;font-size:11.67px;font-weight:normal;color:#000;white-space:pre;line-height:normal;-webkit-text-stroke:0.12px #000;">:</div>
<div id="t99" style="position:absolute;left:257.00px;top:453.2px;font-family:'Liberation Mono', monospace;font-size:11.67px;font-weight:normal;color:#0000FF;white-space:pre;line-height:normal;-webkit-text-stroke:0.12px #0000FF;">no-repeat</div>
<div style="position:absolute;left:93px;top:475px;width:9px;height:1px;background:repeating-linear-gradient(90deg,#808080 0 1px,transparent 1px 2px)"></div>
<div style="position:absolute;left:103px;top:468px;width:13px;height:13px;border:1px solid #8E8F8F;box-sizing:border-box;background:#FFFFFF"><div style="position:absolute;left:1px;top:1px;width:9px;height:9px;background:linear-gradient(135deg,#C4CAD4,#E6E8EC 55%,#F4F4F4)"></div></div><svg style="position:absolute;left:103px;top:468px" width="13" height="13"><path d="M3.4 7.3 L5.9 10 L9.7 2.9" stroke="#3B56A6" stroke-width="1.8" fill="none" stroke-linejoin="round" stroke-linecap="round"/></svg>
<div id="t100" style="position:absolute;left:117.00px;top:469.2px;font-family:'Liberation Mono', monospace;font-size:11.67px;font-weight:normal;color:#FF0000;white-space:pre;line-height:normal;-webkit-text-stroke:0.12px #FF0000;">background-position</div>
<div id="t101" style="position:absolute;left:257.00px;top:469.2px;font-family:'Liberation Mono', monospace;font-size:11.67px;font-weight:normal;color:#000;white-space:pre;line-height:normal;-webkit-text-stroke:0.12px #000;">:</div>
<div id="t102" style="position:absolute;left:271.00px;top:469.2px;font-family:'Liberation Mono', monospace;font-size:11.67px;font-weight:normal;color:#0000FF;white-space:pre;line-height:normal;-webkit-text-stroke:0.12px #0000FF;">left top</div>
<div style="position:absolute;left:70px;top:487px;width:9px;height:9px;border:1px solid #919191;box-sizing:border-box;border-radius:1px;background:linear-gradient(#fff,#E8E8E8)"><div style="position:absolute;left:1px;top:3px;width:5px;height:1px;background:#3D5DB5"></div></div>
<div style="position:absolute;left:80px;top:491px;width:4px;height:1px;background:repeating-linear-gradient(90deg,#808080 0 1px,transparent 1px 2px)"></div>
<div style="position:absolute;left:84px;top:484px;width:13px;height:13px;border:1px solid #8E8F8F;box-sizing:border-box;background:#FFFFFF"><div style="position:absolute;left:1px;top:1px;width:9px;height:9px;background:linear-gradient(135deg,#C4CAD4,#E6E8EC 55%,#F4F4F4)"></div></div><svg style="position:absolute;left:84px;top:484px" width="13" height="13"><path d="M3.4 7.3 L5.9 10 L9.7 2.9" stroke="#3B56A6" stroke-width="1.8" fill="none" stroke-linejoin="round" stroke-linecap="round"/></svg>
<div id="t103" style="position:absolute;left:98.00px;top:485.2px;font-family:'Liberation Mono', monospace;font-size:11.67px;font-weight:normal;color:#800080;white-space:pre;line-height:normal;-webkit-text-stroke:0.12px #800080;">.warning</div>
<div style="position:absolute;left:93px;top:499px;width:1px;height:25px;background:repeating-linear-gradient(#808080 0 1px,transparent 1px 2px)"></div>
<div style="position:absolute;left:93px;top:507px;width:9px;height:1px;background:repeating-linear-gradient(90deg,#808080 0 1px,transparent 1px 2px)"></div>
<div style="position:absolute;left:103px;top:500px;width:13px;height:13px;border:1px solid #8E8F8F;box-sizing:border-box;background:#FFFFFF"><div style="position:absolute;left:1px;top:1px;width:9px;height:9px;background:linear-gradient(135deg,#C4CAD4,#E6E8EC 55%,#F4F4F4)"></div></div><svg style="position:absolute;left:103px;top:500px" width="13" height="13"><path d="M3.4 7.3 L5.9 10 L9.7 2.9" stroke="#3B56A6" stroke-width="1.8" fill="none" stroke-linejoin="round" stroke-linecap="round"/></svg>
<div id="t104" style="position:absolute;left:117.00px;top:501.2px;font-family:'Liberation Mono', monospace;font-size:11.67px;font-weight:normal;color:#FF0000;white-space:pre;line-height:normal;-webkit-text-stroke:0.12px #FF0000;">background-repeat</div>
<div id="t105" style="position:absolute;left:243.00px;top:501.2px;font-family:'Liberation Mono', monospace;font-size:11.67px;font-weight:normal;color:#000;white-space:pre;line-height:normal;-webkit-text-stroke:0.12px #000;">:</div>
<div id="t106" style="position:absolute;left:257.00px;top:501.2px;font-family:'Liberation Mono', monospace;font-size:11.67px;font-weight:normal;color:#0000FF;white-space:pre;line-height:normal;-webkit-text-stroke:0.12px #0000FF;">no-repeat</div>
<div style="position:absolute;left:93px;top:523px;width:9px;height:1px;background:repeating-linear-gradient(90deg,#808080 0 1px,transparent 1px 2px)"></div>
<div style="position:absolute;left:103px;top:516px;width:13px;height:13px;border:1px solid #8E8F8F;box-sizing:border-box;background:#FFFFFF"><div style="position:absolute;left:1px;top:1px;width:9px;height:9px;background:linear-gradient(135deg,#C4CAD4,#E6E8EC 55%,#F4F4F4)"></div></div><svg style="position:absolute;left:103px;top:516px" width="13" height="13"><path d="M3.4 7.3 L5.9 10 L9.7 2.9" stroke="#3B56A6" stroke-width="1.8" fill="none" stroke-linejoin="round" stroke-linecap="round"/></svg>
<div id="t107" style="position:absolute;left:117.00px;top:517.2px;font-family:'Liberation Mono', monospace;font-size:11.67px;font-weight:normal;color:#FF0000;white-space:pre;line-height:normal;-webkit-text-stroke:0.12px #FF0000;">background-position</div>
<div id="t108" style="position:absolute;left:257.00px;top:517.2px;font-family:'Liberation Mono', monospace;font-size:11.67px;font-weight:normal;color:#000;white-space:pre;line-height:normal;-webkit-text-stroke:0.12px #000;">:</div>
<div id="t109" style="position:absolute;left:271.00px;top:517.2px;font-family:'Liberation Mono', monospace;font-size:11.67px;font-weight:normal;color:#0000FF;white-space:pre;line-height:normal;-webkit-text-stroke:0.12px #0000FF;">left top</div>
<div style="position:absolute;left:70px;top:535px;width:9px;height:9px;border:1px solid #919191;box-sizing:border-box;border-radius:1px;background:linear-gradient(#fff,#E8E8E8)"><div style="position:absolute;left:1px;top:3px;width:5px;height:1px;background:#3D5DB5"></div></div>
<div style="position:absolute;left:80px;top:539px;width:4px;height:1px;background:repeating-linear-gradient(90deg,#808080 0 1px,transparent 1px 2px)"></div>
<div style="position:absolute;left:84px;top:532px;width:13px;height:13px;border:1px solid #8E8F8F;box-sizing:border-box;background:#FFFFFF"><div style="position:absolute;left:1px;top:1px;width:9px;height:9px;background:linear-gradient(135deg,#C4CAD4,#E6E8EC 55%,#F4F4F4)"></div></div><svg style="position:absolute;left:84px;top:532px" width="13" height="13"><path d="M3.4 7.3 L5.9 10 L9.7 2.9" stroke="#3B56A6" stroke-width="1.8" fill="none" stroke-linejoin="round" stroke-linecap="round"/></svg>
<div id="t110" style="position:absolute;left:98.00px;top:533.2px;font-family:'Liberation Mono', monospace;font-size:11.67px;font-weight:normal;color:#800080;white-space:pre;line-height:normal;-webkit-text-stroke:0.12px #800080;">.success</div>
<div style="position:absolute;left:93px;top:547px;width:1px;height:25px;background:repeating-linear-gradient(#808080 0 1px,transparent 1px 2px)"></div>
<div style="position:absolute;left:93px;top:555px;width:9px;height:1px;background:repeating-linear-gradient(90deg,#808080 0 1px,transparent 1px 2px)"></div>
<div style="position:absolute;left:103px;top:548px;width:13px;height:13px;border:1px solid #8E8F8F;box-sizing:border-box;background:#FFFFFF"><div style="position:absolute;left:1px;top:1px;width:9px;height:9px;background:linear-gradient(135deg,#C4CAD4,#E6E8EC 55%,#F4F4F4)"></div></div><svg style="position:absolute;left:103px;top:548px" width="13" height="13"><path d="M3.4 7.3 L5.9 10 L9.7 2.9" stroke="#3B56A6" stroke-width="1.8" fill="none" stroke-linejoin="round" stroke-linecap="round"/></svg>
<div id="t111" style="position:absolute;left:117.00px;top:549.2px;font-family:'Liberation Mono', monospace;font-size:11.67px;font-weight:normal;color:#FF0000;white-space:pre;line-height:normal;-webkit-text-stroke:0.12px #FF0000;">background-repeat</div>
<div id="t112" style="position:absolute;left:243.00px;top:549.2px;font-family:'Liberation Mono', monospace;font-size:11.67px;font-weight:normal;color:#000;white-space:pre;line-height:normal;-webkit-text-stroke:0.12px #000;">:</div>
<div id="t113" style="position:absolute;left:257.00px;top:549.2px;font-family:'Liberation Mono', monospace;font-size:11.67px;font-weight:normal;color:#0000FF;white-space:pre;line-height:normal;-webkit-text-stroke:0.12px #0000FF;">no-repeat</div>
<div style="position:absolute;left:93px;top:571px;width:9px;height:1px;background:repeating-linear-gradient(90deg,#808080 0 1px,transparent 1px 2px)"></div>
<div style="position:absolute;left:103px;top:564px;width:13px;height:13px;border:1px solid #8E8F8F;box-sizing:border-box;background:#FFFFFF"><div style="position:absolute;left:1px;top:1px;width:9px;height:9px;background:linear-gradient(135deg,#C4CAD4,#E6E8EC 55%,#F4F4F4)"></div></div><svg style="position:absolute;left:103px;top:564px" width="13" height="13"><path d="M3.4 7.3 L5.9 10 L9.7 2.9" stroke="#3B56A6" stroke-width="1.8" fill="none" stroke-linejoin="round" stroke-linecap="round"/></svg>
<div id="t114" style="position:absolute;left:117.00px;top:565.2px;font-family:'Liberation Mono', monospace;font-size:11.67px;font-weight:normal;color:#FF0000;white-space:pre;line-height:normal;-webkit-text-stroke:0.12px #FF0000;">background-position</div>
<div id="t115" style="position:absolute;left:257.00px;top:565.2px;font-family:'Liberation Mono', monospace;font-size:11.67px;font-weight:normal;color:#000;white-space:pre;line-height:normal;-webkit-text-stroke:0.12px #000;">:</div>
<div id="t116" style="position:absolute;left:271.00px;top:565.2px;font-family:'Liberation Mono', monospace;font-size:11.67px;font-weight:normal;color:#0000FF;white-space:pre;line-height:normal;-webkit-text-stroke:0.12px #0000FF;">left top</div>
<div style="position:absolute;left:70px;top:583px;width:9px;height:9px;border:1px solid #919191;box-sizing:border-box;border-radius:1px;background:linear-gradient(#fff,#E8E8E8)"><div style="position:absolute;left:1px;top:3px;width:5px;height:1px;background:#3D5DB5"></div></div>
<div style="position:absolute;left:80px;top:587px;width:4px;height:1px;background:repeating-linear-gradient(90deg,#808080 0 1px,transparent 1px 2px)"></div>
<div style="position:absolute;left:84px;top:580px;width:13px;height:13px;border:1px solid #8E8F8F;box-sizing:border-box;background:#FFFFFF"><div style="position:absolute;left:1px;top:1px;width:9px;height:9px;background:linear-gradient(135deg,#C4CAD4,#E6E8EC 55%,#F4F4F4)"></div></div><svg style="position:absolute;left:84px;top:580px" width="13" height="13"><path d="M3.4 7.3 L5.9 10 L9.7 2.9" stroke="#3B56A6" stroke-width="1.8" fill="none" stroke-linejoin="round" stroke-linecap="round"/></svg>
<div id="t117" style="position:absolute;left:98.00px;top:581.2px;font-family:'Liberation Mono', monospace;font-size:11.67px;font-weight:normal;color:#800080;white-space:pre;line-height:normal;-webkit-text-stroke:0.12px #800080;">.x</div>
<div style="position:absolute;left:64px;top:386px;width:169px;height:51px;border:1px solid #FF0000;box-shadow:inset 0 0 0 1px rgba(255,40,40,0.45);box-sizing:border-box"></div>
<div style="position:absolute;left:731px;top:163px;width:16px;height:422px;background:#EFEFEF;border-left:1px solid #E6E6E6;box-sizing:border-box"></div>
<svg style="position:absolute;left:735px;top:169px" width="9" height="6"><path d="M0.5 5 L4.5 1 L8.5 5 Z" fill="#333"/></svg>
<svg style="position:absolute;left:735px;top:574px" width="9" height="6"><path d="M0.5 1 L4.5 5 L8.5 1 Z" fill="#333"/></svg>
<div style="position:absolute;left:731px;top:474px;width:15px;height:63px;border:1px solid #9A9A9A;box-sizing:border-box;border-radius:2px;background:linear-gradient(90deg,#F3F3F3,#E2E2E2 45%,#D6D6D6 55%,#CFCFCF)"></div>
<div style="position:absolute;left:735px;top:501px;width:8px;height:1px;background:#555"></div>
<div style="position:absolute;left:735px;top:504px;width:8px;height:1px;background:#555"></div>
<div style="position:absolute;left:735px;top:507px;width:8px;height:1px;background:#555"></div>
<div style="position:absolute;left:62px;top:585px;width:669px;height:17px;background:#EFEFEF"></div>
<svg style="position:absolute;left:68px;top:589px" width="6" height="9"><path d="M5 0.5 L1 4.5 L5 8.5 Z" fill="#333"/></svg>
<svg style="position:absolute;left:717px;top:589px" width="6" height="9"><path d="M1 0.5 L5 4.5 L1 8.5 Z" fill="#333"/></svg>
<div style="position:absolute;left:80px;top:586px;width:224px;height:15px;border:1px solid #9A9A9A;box-sizing:border-box;border-radius:2px;background:linear-gradient(#F3F3F3,#E2E2E2 45%,#D6D6D6 55%,#CFCFCF)"></div>
<div style="position:absolute;left:188px;top:590px;width:1px;height:8px;background:#555"></div>
<div style="position:absolute;left:191px;top:590px;width:1px;height:8px;background:#555"></div>
<div style="position:absolute;left:194px;top:590px;width:1px;height:8px;background:#555"></div>
<div style="position:absolute;left:731px;top:585px;width:16px;height:17px;background:#EFEFEF"></div>
<svg style="position:absolute;left:734px;top:590px" width="12" height="12"><g fill="#8a8a8a"><rect x="9" y="8" width="1" height="1"/><rect x="6" y="8" width="1" height="1"/><rect x="3" y="8" width="1" height="1"/><rect x="9" y="5" width="1" height="1"/><rect x="6" y="5" width="1" height="1"/><rect x="9" y="2" width="1" height="1"/></g><g fill="#fff"><rect x="10" y="9" width="1" height="1"/><rect x="7" y="9" width="1" height="1"/><rect x="4" y="9" width="1" height="1"/><rect x="10" y="6" width="1" height="1"/><rect x="7" y="6" width="1" height="1"/><rect x="10" y="3" width="1" height="1"/></g></svg></body></html>
